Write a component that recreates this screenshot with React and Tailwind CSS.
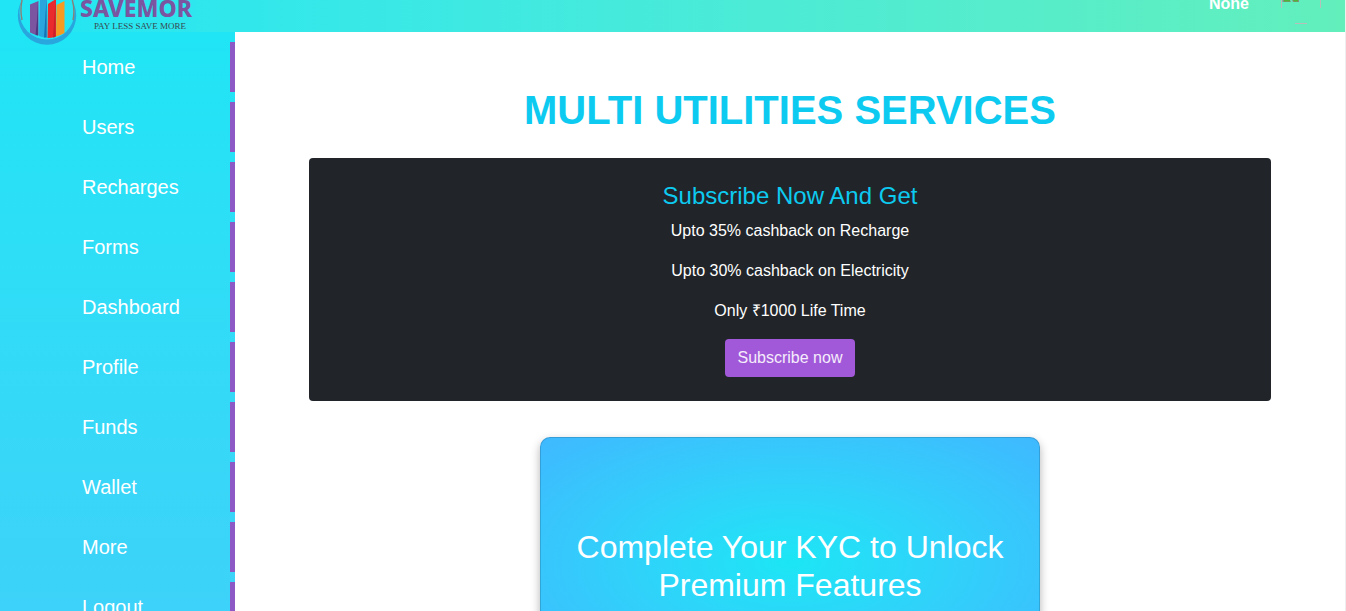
const links = ["Home", "Users", "Recharges", "Forms", "Dashboard", "Profile", "Funds", "Wallet", "More", "Logout"];

const offers = [
  "Upto 35% cashback on Recharge",
  "Upto 30% cashback on Electricity",
  "Only ₹1000 Life Time",
];

function LogoMark() {
  return (
    <svg width="60" height="46" viewBox="0 0 60 46" className="shrink-0" aria-hidden="true">
      <path
        fillRule="evenodd"
        d="M0.800 15.500 A29.200 29.200 0 1 1 59.200 15.500 A29.200 29.200 0 1 1 0.800 15.500Z M2.500 12 A27.500 27.500 0 1 0 57.500 12 A27.500 27.500 0 1 0 2.500 12Z"
        fill="#29a6de"
      />
      <path d="M6 -4 Q2.500 8 5 20" fill="none" stroke="#8a8178" strokeWidth="1.4" />
      <path d="M54 -4 Q58.500 8 56 20" fill="none" stroke="#8a8178" strokeWidth="1.4" />
      <path d="M13 4.500 L21.500 1 V35.500 Q16.500 34.500 13 32.500Z" fill="#7b559f" />
      <path d="M21 1 V35.500 L18.500 35 L20 20Z" fill="#503781" />
      <path d="M23 0 H30 V37.500 Q25.500 37.500 22 36Z" fill="#29a6de" />
      <path d="M29.500 0 V37.500 H27 L28.500 14Z" fill="#1474b5" />
      <path d="M31 4 L39 -1 V36.500 Q34.500 38 30.500 38Z" fill="#ea2b2e" />
      <path d="M38.500 0 V37 L36 37.500 L37.500 14Z" fill="#c9202b" />
      <path d="M39.500 5 L47.500 1 V33 Q43.500 35.500 39 36.500Z" fill="#f79a22" />
    </svg>
  );
}

function Avatar() {
  return (
    <svg width="40" height="24" viewBox="0 0 40 24" role="img" aria-label="Avatar">
      <path d="M0.500 0 V8 M39.500 0 V8 M14 23.500 H26" stroke="#b9bfb8" strokeWidth="1" fill="none" />
      <path d="M1.500 0 H9 L10 2 H1.500Z M11 0 H18 V2 H12Z" fill="#8b8d85" />
      <path d="M3 0 H9 L9 1.500 H3Z M12 0 H17 V1.500 H13Z" fill="#4fb33a" />
    </svg>
  );
}

export default function App() {
  return (
    <div className="flex h-screen flex-col overflow-hidden border-r border-[#eeeeee] bg-white font-['Liberation_Sans',Arial,sans-serif]">
      <header className="relative z-10 flex h-8 shrink-0 items-start justify-between bg-linear-to-r from-[#1fe5f5] to-[#62efbc] pr-6 pl-[17px]">
        <a href="#" className="flex">
          <LogoMark />
          <span className="-mt-1 flex flex-col items-end pl-[3px]">
            <span className="font-['Noto_Sans',sans-serif] text-[23px] leading-6 font-extrabold text-[#7b559f]">SAVEMOR</span>
            <span className="pr-1.5 font-['Liberation_Serif',serif] text-[9px] leading-3 text-[#37474f]">PAY LESS SAVE MORE</span>
          </span>
        </a>
        <div className="flex items-start gap-8">
          <span className="-mt-2 text-base font-bold text-white">None</span>
          <Avatar />
        </div>
      </header>
      <div className="flex min-h-0 flex-1">
        <nav className="flex w-[235px] shrink-0 flex-col gap-2.5 overflow-hidden bg-linear-to-b from-[#1fe5f5] to-[#3dd2f9] pt-2.5">
          {links.map((label) => (
            <a key={label} href="#" className="flex h-[50px] shrink-0 items-center border-r-5 border-[#8d5ac5] pl-[82px] text-xl text-white">
              {label}
            </a>
          ))}
        </nav>
        <main className="flex min-w-0 flex-1 flex-col items-center overflow-hidden px-[74px] pt-[54px] text-center">
          <h1 className="mb-6 text-[40px] leading-12 font-bold text-[#0dcaf0]">MULTI UTILITIES SERVICES</h1>
          <section className="flex w-full flex-col items-center rounded bg-[#212529] p-6 text-white">
            <h2 className="mb-[9px] text-2xl leading-7 text-[#0dcaf0]">Subscribe Now And Get</h2>
            {offers.map((offer) => (
              <p key={offer} className="mb-4 text-base">{offer}</p>
            ))}
            <button type="button" className="h-[38px] rounded bg-[#a259d9] px-[13px] text-base text-[#f5edfb]">Subscribe now</button>
          </section>
          <section className="mt-9 h-[250px] w-full max-w-[500px] shrink-0 rounded-[10px] border border-black/15 bg-radial from-[#1be6f5] to-[#3fb8ff] bg-origin-border px-4 pt-[90px] shadow-[0_4px_10px_rgba(0,0,0,0.3)]">
            <h2 className="text-[32px] leading-[38px] text-white">Complete Your KYC to Unlock Premium Features</h2>
          </section>
        </main>
      </div>
    </div>
  );
}
